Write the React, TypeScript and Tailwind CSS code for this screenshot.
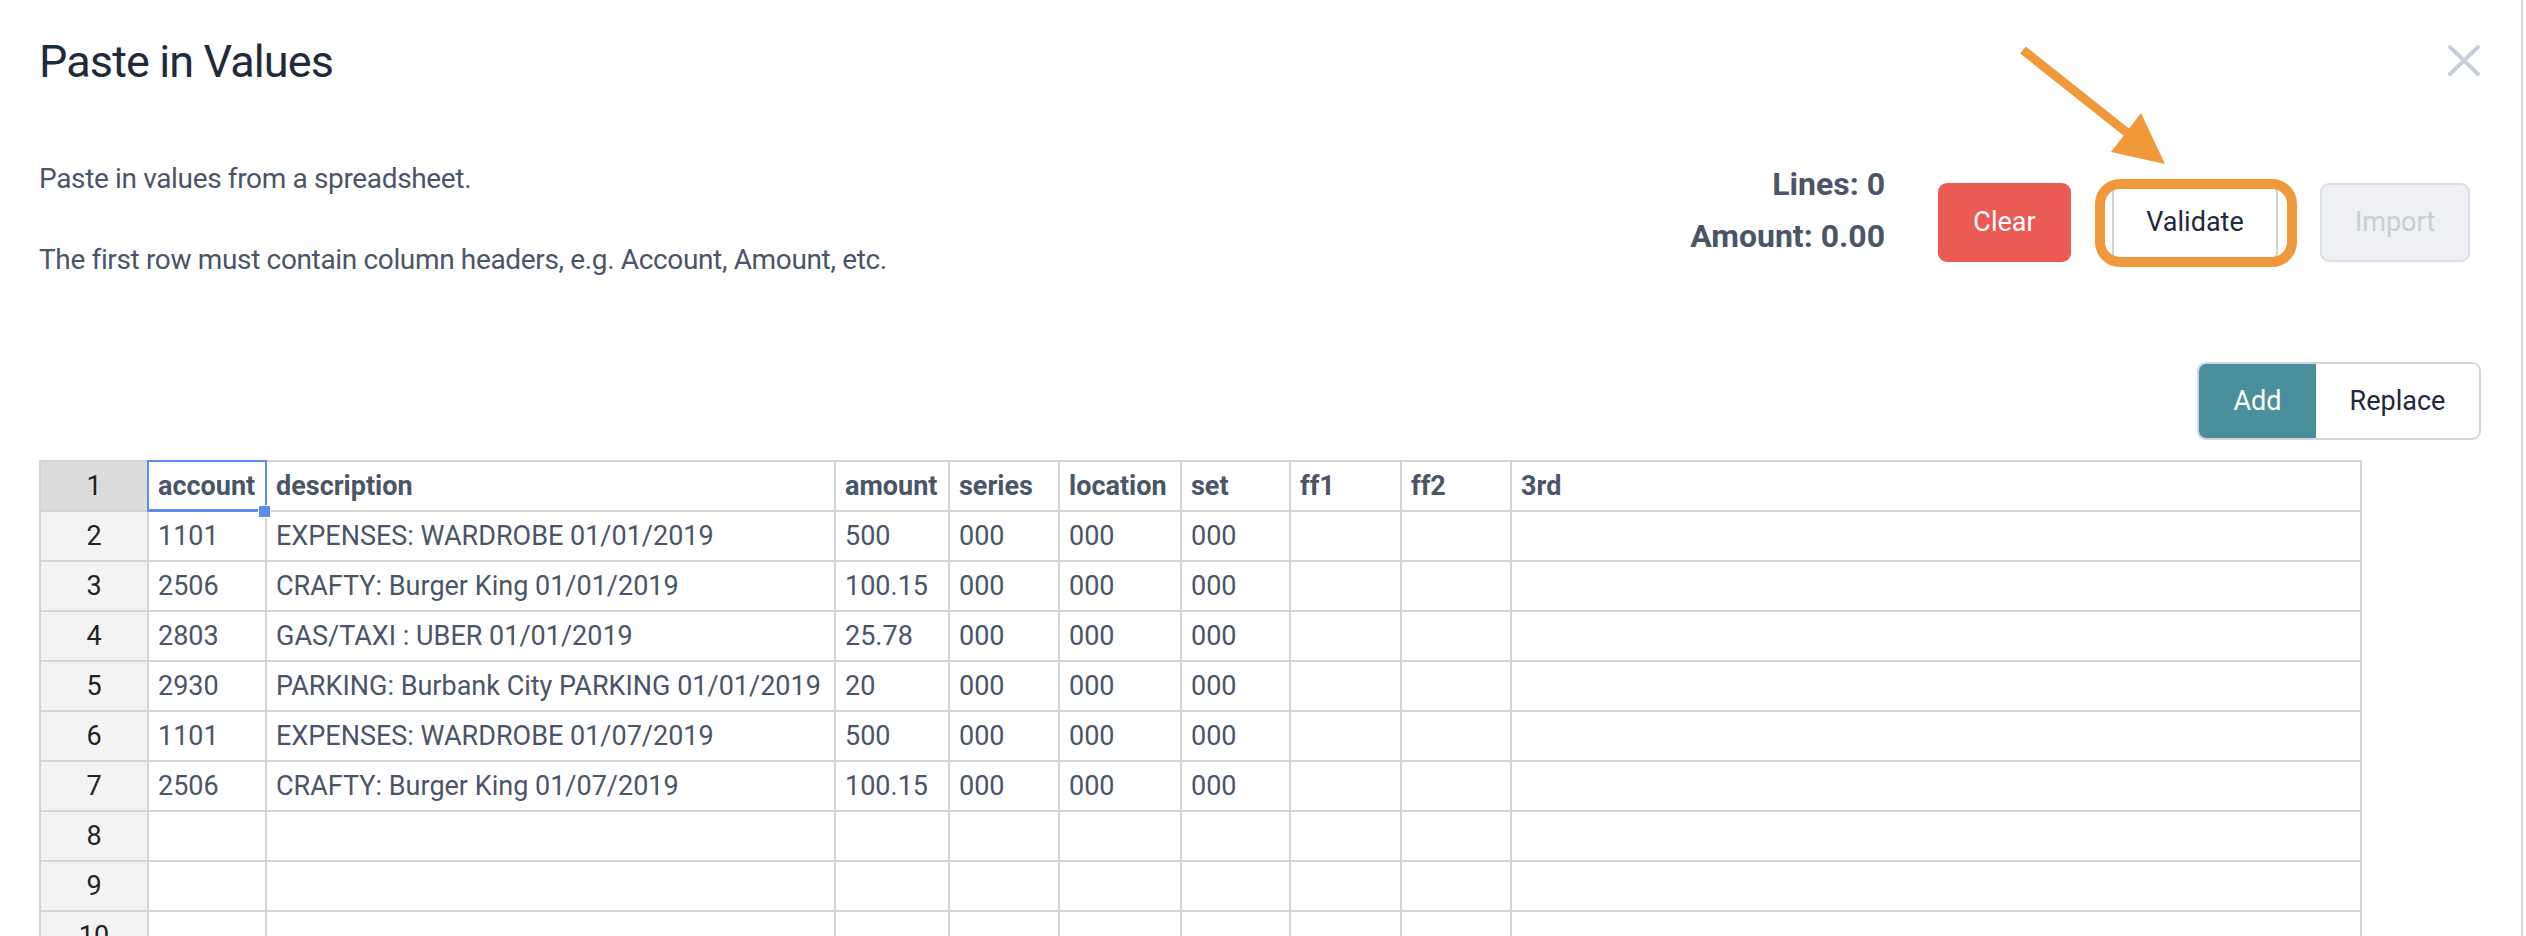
import React from "react";

const colW = [
  "w-[118px]",
  "w-[569px]",
  "w-[114px]",
  "w-[110px]",
  "w-[122px]",
  "w-[109px]",
  "w-[111px]",
  "w-[110px]",
  "w-[850px]",
];

const header = ["account", "description", "amount", "series", "location", "set", "ff1", "ff2", "3rd"];

const data: string[][] = [
  ["1101", "EXPENSES: WARDROBE 01/01/2019", "500", "000", "000", "000", "", "", ""],
  ["2506", "CRAFTY: Burger King 01/01/2019", "100.15", "000", "000", "000", "", "", ""],
  ["2803", "GAS/TAXI : UBER 01/01/2019", "25.78", "000", "000", "000", "", "", ""],
  ["2930", "PARKING: Burbank City PARKING 01/01/2019", "20", "000", "000", "000", "", "", ""],
  ["1101", "EXPENSES: WARDROBE 01/07/2019", "500", "000", "000", "000", "", "", ""],
  ["2506", "CRAFTY: Burger King 01/07/2019", "100.15", "000", "000", "000", "", "", ""],
  ["", "", "", "", "", "", "", "", ""],
  ["", "", "", "", "", "", "", "", ""],
  ["", "", "", "", "", "", "", "", ""],
  ["", "", "", "", "", "", "", "", ""],
];

function Grid() {
  return (
    <div className="mt-[20px] w-[2323px] border-t-2 border-[#d4d4d4] text-[27px] leading-[48px]">
      {/* header row */}
      <div className="flex h-[50px]">
        <div className="w-[110px] shrink-0 border-l-2 border-r-2 border-b-2 border-[#d4d4d4] bg-[#dcdcdc] text-center text-[#222222]">
          1
        </div>
        {header.map((h, i) => (
          <div
            key={h}
            className={`${colW[i]} relative shrink-0 border-r-2 border-b-2 border-[#d4d4d4] bg-white pl-[9px] font-bold text-[#4a5568] whitespace-nowrap`}
          >
            {h}
            {i === 0 && (
              <>
                <div className="absolute -top-[2px] -left-[2px] w-[120px] h-[52px] border-2 border-b-[3px] border-[#5b8def] pointer-events-none" />
                <div className="absolute top-[43px] left-[109px] w-[13px] h-[13px] bg-[#5b8def] border border-white z-10" />
              </>
            )}
          </div>
        ))}
      </div>
      {data.map((row, r) => (
        <div key={r} className="flex h-[50px]">
          <div className="w-[110px] shrink-0 border-l-2 border-r-2 border-b-2 border-[#d4d4d4] bg-[#f3f3f3] text-center text-[#222222]">
            {r + 2}
          </div>
          {row.map((c, i) => (
            <div
              key={i}
              className={`${colW[i]} shrink-0 overflow-hidden border-r-2 border-b-2 border-[#d4d4d4] bg-white pl-[9px] text-[#4a5568] whitespace-nowrap`}
            >
              {c}
            </div>
          ))}
        </div>
      ))}
    </div>
  );
}

export default function App() {
  return (
    <div className="relative h-[936px] w-[2526px] overflow-hidden bg-white font-['Roboto',sans-serif]">
      <div className="h-[936px] w-[2523px] border-r-2 border-[#d8d8d8] pl-[39px] pr-[40px]">
        {/* header */}
        <div className="flex items-start justify-between pt-[35px]">
          <h1 className="text-[45px] leading-[54px] tracking-[-0.9px] text-[#1f2a3a]">Paste in Values</h1>
          <svg className="mt-[9px]" width="34" height="33" viewBox="0 0 34 33" fill="none">
            <path d="M3 3 L31 30 M31 3 L3 30" stroke="#c6cfd9" strokeWidth="4" strokeLinecap="round" />
          </svg>
        </div>

        {/* description + actions */}
        <div className="mt-[69px] flex items-start justify-between">
          <div className="mt-px text-[28px] leading-[40px] tracking-[-0.35px] text-[#4a5568]">
            <p>Paste in values from a spreadsheet.</p>
            <p className="mt-[41px]">The first row must contain column headers, e.g. Account, Amount, etc.</p>
          </div>
          <div className="mr-[11px] flex items-end">
            <div className="text-right text-[32px] font-bold leading-[52px] text-[#4a5568]">
              <div>Lines: 0</div>
              <div>Amount: 0.00</div>
            </div>
            <button className="ml-[53px] flex h-[79px] w-[133px] items-center justify-center rounded-[9px] bg-[#ec5a54] text-[27px] text-white">
              Clear
            </button>
            <button className="ml-[41px] flex h-[79px] w-[166px] items-center justify-center rounded-[9px] border-2 border-[#cfd3d8] bg-white text-[27px] text-[#1e293b]">
              Validate
            </button>
            <button className="ml-[42px] flex h-[79px] w-[150px] items-center justify-center rounded-[9px] border-2 border-[#d9dfe7] bg-[#eef0f4] text-[27px] text-[#c5ced8]">
              Import
            </button>
          </div>
        </div>

        {/* add / replace */}
        <div className="mt-[82px] flex justify-end">
          <div className="flex h-[78px] overflow-hidden rounded-[9px] border-2 border-[#cbd5e1] text-[27px]">
            <div className="flex w-[117px] items-center justify-center bg-[#4a8f9c] text-white">Add</div>
            <div className="flex w-[163px] items-center justify-center bg-white text-[#1e293b]">Replace</div>
          </div>
        </div>

        <Grid />
      </div>

      {/* annotation overlay */}
      <svg className="pointer-events-none absolute left-0 top-0" width="2526" height="936" viewBox="0 0 2526 936">
        <rect x="2100" y="184" width="192" height="78" rx="20" ry="20" fill="none" stroke="#f0993a" strokeWidth="10" />
        <line x1="2023" y1="50" x2="2130" y2="135" stroke="#f0993a" strokeWidth="9" />
        <polygon points="2141,113 2111,152 2165,164" fill="#f0993a" />
      </svg>
    </div>
  );
}
